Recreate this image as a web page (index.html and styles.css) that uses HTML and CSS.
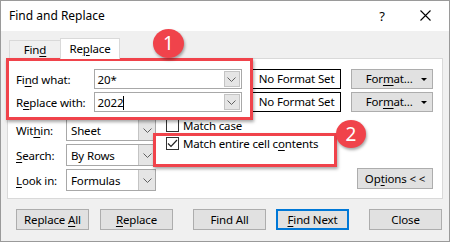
FILE: index.html
```html
<!DOCTYPE html>
<html lang="en">
<head>
  <meta charset="UTF-8" />
  <title>Find and Replace</title>
  <link rel="stylesheet" href="styles.css">
</head>
<body>
  <div class="window">
    <div class="titlebar">
      <span class="title">Find and Replace</span>
      <span class="help">?</span>
      <svg class="close-x" width="11" height="11" viewBox="0 0 11 11">
        <path d="M0.5 0.5 L10.5 10.5 M10.5 0.5 L0.5 10.5" stroke="#000" stroke-width="1.1" fill="none"/>
      </svg>
    </div>

    <div class="body">
      <div class="tabs">
        <div class="tab">Fin<u>d</u></div>
        <div class="tab active">Re<u>p</u>lace</div>
      </div>

      <div class="panel">
        <div class="row">
          <label class="label-wide">Fi<u>n</u>d what:</label>
          <div class="combo">
            <span class="combo-text">20*</span>
            <span class="combo-btn">
              <svg width="9" height="5" viewBox="0 0 9 5"><path d="M0.5 0.5 L4.5 4.5 L8.5 0.5" stroke="#606060" fill="none"/></svg>
            </span>
          </div>
          <div class="nofmt">No Format Set</div>
          <div class="btn fmt">For<u>m</u>at... <span class="tri"></span></div>
        </div>
        <div class="row">
          <label class="label-wide">R<u>e</u>place with:</label>
          <div class="combo">
            <span class="combo-text">2022<span class="caret"></span></span>
            <span class="combo-btn">
              <svg width="9" height="5" viewBox="0 0 9 5"><path d="M0.5 0.5 L4.5 4.5 L8.5 0.5" stroke="#606060" fill="none"/></svg>
            </span>
          </div>
          <div class="nofmt">No Format Set</div>
          <div class="btn fmt">For<u>m</u>at... <span class="tri"></span></div>
        </div>

        <div class="options">
          <div class="opt-rows">
            <div class="opt-row">
              <label class="label-short">Wit<u>h</u>in:</label>
              <div class="select"><span class="select-text">Sheet</span><span class="select-btn"><svg width="9" height="5" viewBox="0 0 9 5"><path d="M0.5 0.5 L4.5 4.5 L8.5 0.5" stroke="#606060" fill="none"/></svg></span></div>
            </div>
            <div class="opt-row">
              <label class="label-short"><u>S</u>earch:</label>
              <div class="select"><span class="select-text">By Rows</span><span class="select-btn"><svg width="9" height="5" viewBox="0 0 9 5"><path d="M0.5 0.5 L4.5 4.5 L8.5 0.5" stroke="#606060" fill="none"/></svg></span></div>
            </div>
            <div class="opt-row">
              <label class="label-short"><u>L</u>ook in:</label>
              <div class="select"><span class="select-text">Formulas</span><span class="select-btn"><svg width="9" height="5" viewBox="0 0 9 5"><path d="M0.5 0.5 L4.5 4.5 L8.5 0.5" stroke="#606060" fill="none"/></svg></span></div>
            </div>
          </div>

          <div class="checks">
            <div class="check"><span class="box"></span>Match case</div>
            <div class="check">
              <span class="box">
                <svg width="11" height="11" viewBox="0 0 11 11"><path d="M1 5.5 L4 8.5 L10 2" stroke="#222" stroke-width="1.2" fill="none"/></svg>
              </span>Match entire cell c<u>o</u>ntents
            </div>
          </div>

          <div class="btn options-btn">Op<u>t</u>ions &lt; &lt;</div>
        </div>
      </div>

      <div class="actions">
        <div class="btn action">Replace <u>A</u>ll</div>
        <div class="btn action near"><u>R</u>eplace</div>
        <div class="btn action far">Find All</div>
        <div class="btn action near default"><u>F</u>ind Next</div>
        <div class="btn action far">Close</div>
      </div>
    </div>

    <div class="callout callout-1"></div>
    <div class="callout callout-2"></div>
    <div class="badge badge-1">1</div>
    <div class="badge badge-2">2</div>
  </div>
</body>
</html>
```

FILE: styles.css
```css
* {
  box-sizing: border-box;
}

body {
  margin: 0;
  background: #fff;
  font-family: "Noto Sans", "Liberation Sans", sans-serif;
  font-size: 11.5px;
  letter-spacing: -0.15px;
  color: #000;
}

u {
  text-decoration-thickness: 1px;
  text-underline-offset: 2px;
}

.window {
  position: relative;
  width: 450px;
  height: 242px;
  border: 1px solid #9a9a9a;
  background: #f0f0f0;
  overflow: hidden;
}

.titlebar {
  height: 30px;
  background: #fff;
  display: flex;
  align-items: center;
  padding: 0 0 1px 8px;
  font-size: 12px;
  letter-spacing: 0;
}

.title {
  flex-grow: 1;
}

.help {
  font-size: 13px;
  margin-right: 35px;
}

.close-x {
  margin-right: 18px;
}

.body {
  padding-top: 7px;
}

.tabs {
  display: flex;
  align-items: flex-end;
  height: 20px;
  padding-left: 8px;
  position: relative;
  z-index: 1;
}

.tab {
  height: 18px;
  width: 51px;
  text-align: center;
  line-height: 17px;
  border: 1px solid #d9d9d9;
  border-right: none;
  border-bottom: none;
}

.tab.active {
  height: 21px;
  width: 60px;
  margin-bottom: -1px;
  background: #fff;
  border-right: 1px solid #d9d9d9;
  line-height: 19px;
}

.panel {
  margin: 0 6px 0 6px;
  background: #fff;
  border: 1px solid #d9d9d9;
  padding: 10px 9px 7px 8px;
}

.row {
  display: flex;
  align-items: center;
  height: 20px;
  margin-bottom: 3px;
}

.label-wide {
  width: 78px;
}

.combo {
  width: 149px;
  height: 20px;
  border: 1px solid #a8a8a8;
  display: flex;
  align-items: center;
  justify-content: space-between;
  padding: 0 1px 0 3px;
}

.caret {
  display: inline-block;
  width: 1px;
  height: 14px;
  background: #000;
  vertical-align: -3px;
}

.combo-btn {
  width: 16px;
  height: 16px;
  background: #e5e5e5;
  border: 1px solid #c4c4c4;
  display: flex;
  align-items: center;
  justify-content: center;
}

.nofmt {
  width: 90px;
  height: 20px;
  margin-left: 10px;
  border: 1px solid #000;
  text-align: center;
  line-height: 18px;
  white-space: nowrap;
}

.btn {
  background: #e1e1e1;
  border: 1px solid #adadad;
  text-align: center;
}

.fmt {
  width: 82px;
  height: 20px;
  margin-left: 10px;
  line-height: 18px;
  position: relative;
  padding-right: 6px;
}

.tri {
  position: absolute;
  right: 5px;
  top: 8px;
  border-left: 3px solid transparent;
  border-right: 3px solid transparent;
  border-top: 3px solid #000;
}

.options {
  display: flex;
  margin-top: 7px;
}

.opt-rows {
  display: flex;
  flex-direction: column;
  gap: 3px;
}

.opt-row {
  display: flex;
  align-items: center;
  height: 22px;
}

.label-short {
  width: 50px;
}

.select {
  width: 90px;
  height: 22px;
  border: 1px solid #a8a8a8;
  display: flex;
  align-items: center;
  justify-content: space-between;
  padding-left: 4px;
}

.select-btn {
  width: 17px;
  height: 20px;
  background: #e5e5e5;
  border-left: 1px solid #c4c4c4;
  display: flex;
  align-items: center;
  justify-content: center;
}

.checks {
  margin-left: 10px;
  display: flex;
  flex-direction: column;
  gap: 5px;
}

.check {
  display: flex;
  align-items: center;
  height: 13px;
}

.box {
  width: 13px;
  height: 13px;
  border: 1px solid #333;
  margin-right: 4px;
  display: flex;
  align-items: center;
  justify-content: center;
}

.options-btn {
  margin-left: auto;
  align-self: flex-end;
  width: 76px;
  height: 21px;
  line-height: 19px;
  margin-bottom: 2px;
}

.actions {
  display: flex;
  padding: 10px 0 0 15px;
}

.action {
  width: 73px;
  height: 21px;
  line-height: 19px;
}

.action.near {
  margin-left: 11px;
}

.action.far {
  margin-left: 20px;
}

.action.default {
  border: 2px solid #0078d7;
  line-height: 17px;
  margin-left: 10px;
}

.callout {
  position: absolute;
  border: 3px solid #f0434b;
  box-shadow: 1px 2px 3px rgba(0, 0, 0, 0.35);
}

.callout-1 {
  left: 5px;
  top: 57px;
  width: 247px;
  height: 62px;
}

.callout-2 {
  left: 152px;
  top: 132px;
  width: 184px;
  height: 34px;
}

.badge {
  position: absolute;
  border-radius: 50%;
  background: #f0434b;
  color: #fff;
  font-size: 19px;
  letter-spacing: 0;
  text-align: center;
  box-shadow: 1px 2px 3px rgba(0, 0, 0, 0.35);
}

.badge-1 {
  left: 152px;
  top: 28px;
  width: 31px;
  height: 29px;
  line-height: 29px;
}

.badge-2 {
  left: 335px;
  top: 119px;
  width: 30px;
  height: 28px;
  line-height: 28px;
}
```
